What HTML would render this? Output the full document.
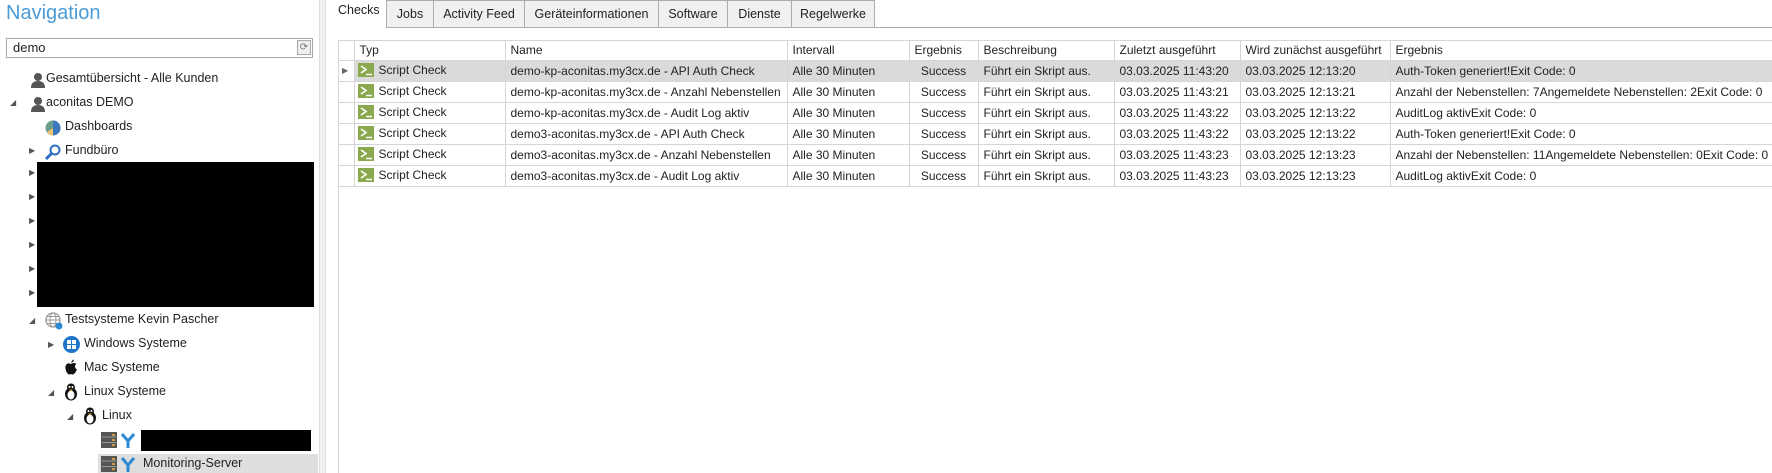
<!DOCTYPE html>
<html><head><meta charset="utf-8"><style>
*{margin:0;padding:0;box-sizing:border-box}
body{width:1772px;height:473px;overflow:hidden;background:#fff;font-family:"Segoe UI","Liberation Sans",sans-serif;font-size:12px;color:#222;position:relative}
.a{position:absolute;white-space:nowrap}
.nav{left:6px;top:2px;font-size:20px;color:#4a9bd6}
.search{left:6px;top:38px;width:307px;height:20px;border:1px solid #a8a8a8;padding:1px 6px;font-size:13px}
.rbtn{left:297px;top:40px;width:14px;height:15px;border:1px solid #aaa;background:#eee;font-size:10px;color:#777;text-align:center;line-height:13px}
.split{left:319px;top:0;width:7px;height:473px;background:#f0f0f0;border-left:1px solid #ddd;border-right:1px solid #ddd}
.tr{font-size:12.5px}
.arr{font-size:8px;color:#555}
.tab{top:0;height:27px;border:1px solid #acacac;border-bottom:none;background:#f0f0f0;text-align:center;line-height:27px;font-size:12.5px}
.grid{left:338px;top:40px;width:1434px;border-top:1px solid #d5d5d5;border-left:1px solid #d5d5d5}
table{border-collapse:collapse;table-layout:fixed;width:1434px}
td{height:21px;border-right:1px solid #d5d5d5;border-bottom:1px solid #d5d5d5;padding:0 5px;white-space:nowrap;overflow:hidden;vertical-align:middle}
tr.h td{height:19px}
tr.sel td{background:#dadada}
tr.sel td:first-child{background:#fff}
.ic{display:inline-block;width:16px;height:14px;background:#8aa84d;vertical-align:middle;margin-right:5px;position:relative;top:-1px}
.ic svg{position:absolute;left:0;top:0}
.c{text-align:center}
</style></head><body>
<div class="a nav">Navigation</div>
<div class="a search">demo</div>
<div class="a rbtn">⟳</div>

<svg class="a" style="left:31px;top:72px" width="14" height="16"><circle cx="7" cy="5" r="4" fill="#555"/><path d="M0 16 Q0 9 7 9 Q14 9 14 16Z" fill="#555"/></svg>
<div class="a tr" style="left:46px;top:71px">Gesamtübersicht - Alle Kunden</div>
<div class="a arr" style="left:10px;top:98px">◢</div>
<svg class="a" style="left:31px;top:96px" width="14" height="16"><circle cx="7" cy="5" r="4" fill="#555"/><path d="M0 16 Q0 9 7 9 Q14 9 14 16Z" fill="#555"/></svg>
<div class="a tr" style="left:46px;top:95px">aconitas DEMO</div>
<svg class="a" style="left:45px;top:120px" width="16" height="16"><circle cx="8" cy="8" r="7.5" fill="#6a9e8c"/><path d="M8 8 L8 0.5 A7.5 7.5 0 0 1 15.5 8Z" fill="#3c78c0"/><path d="M8 8 L15.5 8 A7.5 7.5 0 0 1 8 15.5Z" fill="#3c78c0"/><path d="M8 8 L8 15.5 A7.5 7.5 0 0 1 2 12Z" fill="#f0c070"/></svg>
<div class="a tr" style="left:65px;top:119px">Dashboards</div>
<div class="a arr" style="left:29px;top:146px">▶</div>
<svg class="a" style="left:45px;top:144px" width="16" height="16"><circle cx="10" cy="6" r="4.5" fill="none" stroke="#2d6fc0" stroke-width="2"/><path d="M7 9 L1 15" stroke="#2d6fc0" stroke-width="3"/></svg>
<div class="a tr" style="left:65px;top:143px">Fundbüro</div>
<div class="a arr" style="left:29px;top:168px">▶</div><div class="a arr" style="left:29px;top:192px">▶</div><div class="a arr" style="left:29px;top:216px">▶</div><div class="a arr" style="left:29px;top:240px">▶</div><div class="a arr" style="left:29px;top:264px">▶</div><div class="a arr" style="left:29px;top:288px">▶</div>
<div class="a" style="left:37px;top:162px;width:277px;height:145px;background:#000"></div>
<div class="a arr" style="left:29px;top:316px">◢</div>
<svg class="a" style="left:45px;top:312px" width="18" height="18"><circle cx="8" cy="8" r="7" fill="none" stroke="#999" stroke-width="1.3"/><ellipse cx="8" cy="8" rx="3" ry="7" fill="none" stroke="#999"/><path d="M1 8H15M2 4.5H14M2 11.5H14" stroke="#999"/><circle cx="14" cy="14" r="3.5" fill="#2a8ad8"/></svg>
<div class="a tr" style="left:65px;top:312px">Testsysteme Kevin Pascher</div>
<div class="a arr" style="left:48px;top:340px">▶</div>
<svg class="a" style="left:63px;top:336px" width="17" height="17"><circle cx="8.5" cy="8.5" r="8.5" fill="#1e74c8"/><rect x="4" y="4" width="4" height="4" fill="#fff"/><rect x="9" y="4" width="4" height="4" fill="#fff"/><rect x="4" y="9" width="4" height="4" fill="#fff"/><rect x="9" y="9" width="4" height="4" fill="#fff"/></svg>
<div class="a tr" style="left:84px;top:336px">Windows Systeme</div>
<svg class="a" style="left:64px;top:359px" width="14" height="16"><path d="M7 4 Q8 1 10 0.5 Q10 3 7 4Z M7 5 Q3 3 1.5 7 Q1 12 4 15 Q5.5 16 7 15 Q8.5 16 10 15 Q12 13 13 10.5 Q10.5 9 11 6.5 Q12 5.5 12.3 5 Q10 3 7 5Z" fill="#111"/></svg>
<div class="a tr" style="left:84px;top:360px">Mac Systeme</div>
<div class="a arr" style="left:48px;top:388px">◢</div>
<svg class="a" style="left:63px;top:383px" width="16" height="18"><ellipse cx="8" cy="11" rx="6" ry="6.5" fill="#111"/><circle cx="8" cy="4.5" r="4" fill="#111"/><ellipse cx="8" cy="12" rx="3.5" ry="4.5" fill="#fff"/><circle cx="6.5" cy="4" r="1" fill="#fff"/><circle cx="9.5" cy="4" r="1" fill="#fff"/><path d="M6 6.5H10L8 8Z" fill="#e8b020"/></svg>
<div class="a tr" style="left:84px;top:384px">Linux Systeme</div>
<div class="a arr" style="left:67px;top:412px">◢</div>
<svg class="a" style="left:82px;top:407px" width="16" height="18"><ellipse cx="8" cy="11" rx="6" ry="6.5" fill="#111"/><circle cx="8" cy="4.5" r="4" fill="#111"/><ellipse cx="8" cy="12" rx="3.5" ry="4.5" fill="#fff"/><circle cx="6.5" cy="4" r="1" fill="#fff"/><circle cx="9.5" cy="4" r="1" fill="#fff"/><path d="M6 6.5H10L8 8Z" fill="#e8b020"/></svg>
<div class="a tr" style="left:102px;top:408px">Linux</div>
<div class="a" style="left:98px;top:454px;width:220px;height:19px;background:#dedede"></div>
<svg class="a" style="left:101px;top:432px" width="16" height="16"><rect width="16" height="16" fill="#555"/><path d="M1 5H15M1 10.5H15" stroke="#999"/><rect x="11" y="2" width="3" height="2" fill="#c9a040"/><rect x="11" y="7" width="3" height="2" fill="#c9a040"/><rect x="11" y="12" width="3" height="2" fill="#c9a040"/></svg>
<svg class="a" style="left:120px;top:432px" width="16" height="17"><path d="M2 2 L8 9 L14 2 M8 9 V16" stroke="#2a8ad8" stroke-width="3" fill="none"/></svg>
<div class="a" style="left:141px;top:430px;width:170px;height:21px;background:#000"></div>
<svg class="a" style="left:101px;top:456px" width="16" height="16"><rect width="16" height="16" fill="#555"/><path d="M1 5H15M1 10.5H15" stroke="#999"/><rect x="11" y="2" width="3" height="2" fill="#c9a040"/><rect x="11" y="7" width="3" height="2" fill="#c9a040"/><rect x="11" y="12" width="3" height="2" fill="#c9a040"/></svg>
<svg class="a" style="left:120px;top:456px" width="16" height="17"><path d="M2 2 L8 9 L14 2 M8 9 V16" stroke="#2a8ad8" stroke-width="3" fill="none"/></svg>
<div class="a tr" style="left:143px;top:456px">Monitoring-Server</div>

<div class="a split"></div>

<div class="a" style="left:386px;top:27px;width:1386px;height:1px;background:#acacac"></div>
<div class="a" style="left:338px;top:3px;font-size:12.5px">Checks</div>
<div class="a tab" style="left:386px;width:48px">Jobs</div>
<div class="a tab" style="left:433px;width:92px">Activity Feed</div>
<div class="a tab" style="left:524px;width:135px">Geräteinformationen</div>
<div class="a tab" style="left:658px;width:70px">Software</div>
<div class="a tab" style="left:727px;width:65px">Dienste</div>
<div class="a tab" style="left:791px;width:84px">Regelwerke</div>

<div class="a grid"><table>
<colgroup><col style="width:15px"><col style="width:151px"><col style="width:282px"><col style="width:122px"><col style="width:69px"><col style="width:136px"><col style="width:126px"><col style="width:150px"><col style="width:383px"></colgroup>
<tr class="h"><td></td><td>Typ</td><td>Name</td><td>Intervall</td><td>Ergebnis</td><td>Beschreibung</td><td>Zuletzt ausgeführt</td><td>Wird zunächst ausgeführt</td><td>Ergebnis</td></tr>
<tr class="sel"><td style="padding:0 3px;font-size:8px;color:#666">▶</td><td style="padding-left:3px"><span class="ic"><svg width="16" height="14"><path d="M3 3 L8 6.5 L3 10" stroke="#fff" stroke-width="1.6" fill="none"/><path d="M8 11.5H14" stroke="#fff" stroke-width="1.5"/></svg></span>Script Check</td><td>demo-kp-aconitas.my3cx.de - API Auth Check</td><td>Alle 30 Minuten</td><td class="c">Success</td><td>Führt ein Skript aus.</td><td>03.03.2025 11:43:20</td><td>03.03.2025 12:13:20</td><td>Auth-Token generiert!Exit Code: 0</td></tr>
<tr><td></td><td style="padding-left:3px"><span class="ic"><svg width="16" height="14"><path d="M3 3 L8 6.5 L3 10" stroke="#fff" stroke-width="1.6" fill="none"/><path d="M8 11.5H14" stroke="#fff" stroke-width="1.5"/></svg></span>Script Check</td><td>demo-kp-aconitas.my3cx.de - Anzahl Nebenstellen</td><td>Alle 30 Minuten</td><td class="c">Success</td><td>Führt ein Skript aus.</td><td>03.03.2025 11:43:21</td><td>03.03.2025 12:13:21</td><td>Anzahl der Nebenstellen: 7Angemeldete Nebenstellen: 2Exit Code: 0</td></tr>
<tr><td></td><td style="padding-left:3px"><span class="ic"><svg width="16" height="14"><path d="M3 3 L8 6.5 L3 10" stroke="#fff" stroke-width="1.6" fill="none"/><path d="M8 11.5H14" stroke="#fff" stroke-width="1.5"/></svg></span>Script Check</td><td>demo-kp-aconitas.my3cx.de - Audit Log aktiv</td><td>Alle 30 Minuten</td><td class="c">Success</td><td>Führt ein Skript aus.</td><td>03.03.2025 11:43:22</td><td>03.03.2025 12:13:22</td><td>AuditLog aktivExit Code: 0</td></tr>
<tr><td></td><td style="padding-left:3px"><span class="ic"><svg width="16" height="14"><path d="M3 3 L8 6.5 L3 10" stroke="#fff" stroke-width="1.6" fill="none"/><path d="M8 11.5H14" stroke="#fff" stroke-width="1.5"/></svg></span>Script Check</td><td>demo3-aconitas.my3cx.de - API Auth Check</td><td>Alle 30 Minuten</td><td class="c">Success</td><td>Führt ein Skript aus.</td><td>03.03.2025 11:43:22</td><td>03.03.2025 12:13:22</td><td>Auth-Token generiert!Exit Code: 0</td></tr>
<tr><td></td><td style="padding-left:3px"><span class="ic"><svg width="16" height="14"><path d="M3 3 L8 6.5 L3 10" stroke="#fff" stroke-width="1.6" fill="none"/><path d="M8 11.5H14" stroke="#fff" stroke-width="1.5"/></svg></span>Script Check</td><td>demo3-aconitas.my3cx.de - Anzahl Nebenstellen</td><td>Alle 30 Minuten</td><td class="c">Success</td><td>Führt ein Skript aus.</td><td>03.03.2025 11:43:23</td><td>03.03.2025 12:13:23</td><td>Anzahl der Nebenstellen: 11Angemeldete Nebenstellen: 0Exit Code: 0</td></tr>
<tr><td></td><td style="padding-left:3px"><span class="ic"><svg width="16" height="14"><path d="M3 3 L8 6.5 L3 10" stroke="#fff" stroke-width="1.6" fill="none"/><path d="M8 11.5H14" stroke="#fff" stroke-width="1.5"/></svg></span>Script Check</td><td>demo3-aconitas.my3cx.de - Audit Log aktiv</td><td>Alle 30 Minuten</td><td class="c">Success</td><td>Führt ein Skript aus.</td><td>03.03.2025 11:43:23</td><td>03.03.2025 12:13:23</td><td>AuditLog aktivExit Code: 0</td></tr>
</table></div>
<div class="a" style="left:338px;top:40px;width:1px;height:433px;background:#d5d5d5"></div>
</body></html>
